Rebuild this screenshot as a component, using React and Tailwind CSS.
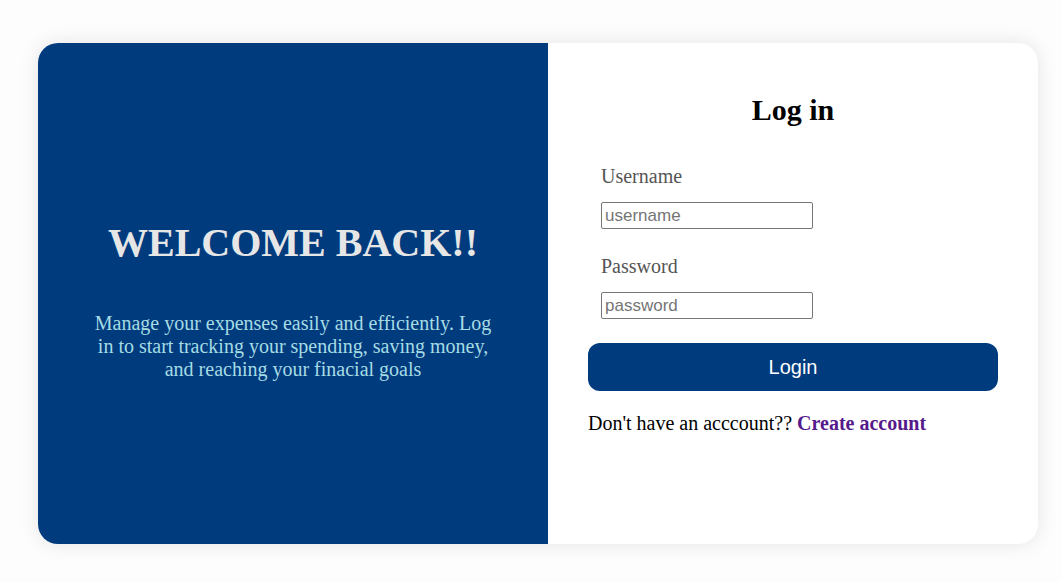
export default function App() {
  return (
    <main className="flex min-h-screen items-center justify-center bg-[#fdfdfd] pt-[43px] pr-[23px] pb-[38px] pl-[38px] font-['Liberation_Serif',serif] text-[20px] leading-[23px] text-black">
      <div className="grid w-full max-w-[1000px] grid-cols-[51fr_49fr] overflow-hidden rounded-[20px] bg-white shadow-[0_0_20px_rgba(0,0,0,0.1)]">
        <section className="flex flex-col items-center justify-center bg-[#003b7e] px-12 pt-[54px] pb-10 text-center">
          <h1 className="text-[40px] leading-[46px] font-bold text-[#e6e6e6]">WELCOME BACK!!</h1>
          <p className="mt-[46px] text-[#a6dce4]">
            Manage your expenses easily and efficiently. Log in to start tracking your spending, saving money, and reaching your finacial goals
          </p>
        </section>
        <form className="flex flex-col px-10 pt-[49px] pb-[109px]" onSubmit={(e) => e.preventDefault()}>
          <h2 className="mb-[11px] text-center text-[30px] leading-[36px] font-bold">Log in</h2>
          <div className="mt-[26px] flex flex-col items-start gap-[14px] px-[13px]">
            <label htmlFor="username" className="text-[#555555]">Username</label>
            <input id="username" type="text" placeholder="username" className="h-[27px] w-[212px] rounded-[2px] border border-[#767676] px-[3px] font-['Liberation_Sans',sans-serif] text-[17px] placeholder:text-[#757575]" />
          </div>
          <div className="mt-[26px] flex flex-col items-start gap-[14px] px-[13px]">
            <label htmlFor="password" className="text-[#555555]">Password</label>
            <input id="password" type="password" placeholder="password" className="h-[27px] w-[212px] rounded-[2px] border border-[#767676] px-[3px] font-['Liberation_Sans',sans-serif] text-[17px] placeholder:text-[#757575]" />
          </div>
          <button type="submit" className="mt-6 h-12 w-full rounded-[12px] bg-[#003b7e] font-['Liberation_Sans',sans-serif] text-[20px] text-white">Login</button>
          <p className="mt-[21px]">
            Don't have an acccount?? <a href="#create" className="font-bold text-[#551a8b]">Create account</a>
          </p>
        </form>
      </div>
    </main>
  );
}
